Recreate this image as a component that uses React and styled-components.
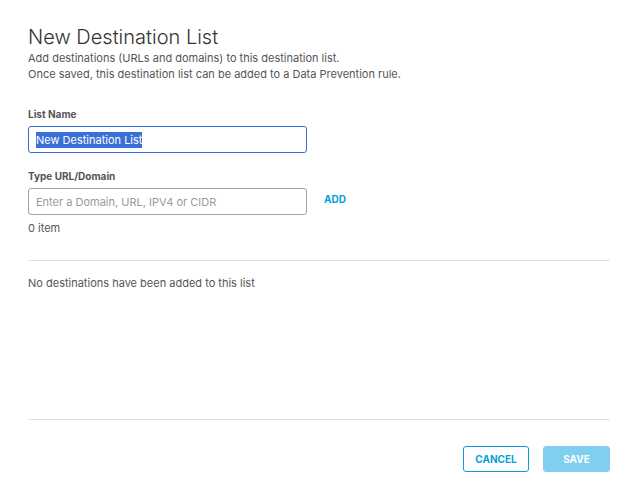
import React from "react";
import styled, { createGlobalStyle } from "styled-components";

const GlobalStyle = createGlobalStyle`
  html, body {
    margin: 0;
    padding: 0;
    background: #FFFFFF;
  }
  body {
    font-family: Inter, "Noto Sans", "Liberation Sans", sans-serif;
  }
`;

const Page = styled.div`
  display: flex;
  flex-direction: column;
  box-sizing: border-box;
  height: 500px;
  padding: 25px 28px 28px 28px;
`;

const Title = styled.h1`
  margin: 0;
  font-size: 20px;
  line-height: 24px;
  font-weight: 300;
  color: #333333;
`;

const Subtitle = styled.p`
  margin: 1px 0 0;
  font-size: 11px;
  line-height: 16px;
  color: #555555;
`;

const Field = styled.div`
  display: flex;
  flex-direction: column;
  margin-top: ${(p) => p.$top}px;
`;

const Label = styled.label`
  font-size: 10px;
  line-height: 14px;
  font-weight: 700;
  color: #555555;
  margin-bottom: 5px;
`;

const Row = styled.div`
  display: flex;
  align-items: center;
  gap: 17px;
`;

const InputBox = styled.div`
  box-sizing: border-box;
  display: flex;
  align-items: center;
  width: 279px;
  height: 27px;
  padding: 0 7px;
  border: 1px solid ${(p) => (p.$focused ? "#2f6fdc" : "#a3a3a3")};
  border-radius: 3px;
  font-size: 11px;
  color: ${(p) => (p.$placeholder ? "#9a9a9a" : "#333333")};
`;

const Selected = styled.span`
  background: #3a6fd8;
  color: #FFFFFF;
  line-height: 16px;
`;

const LinkButton = styled.button`
  border: 0;
  background: none;
  padding: 0 0 5px;
  font-family: inherit;
  font-size: 10px;
  font-weight: 700;
  color: #049fd9;
  cursor: pointer;
`;

const Count = styled.div`
  margin-top: 5px;
  font-size: 11px;
  line-height: 16px;
  color: #555555;
`;

const Divider = styled.hr`
  margin: ${(p) => p.$top}px 0 0;
  border: 0;
  border-top: 1px solid #e0e0e0;
`;

const ListArea = styled.div`
  flex: 1;
  padding-top: 14px;
  font-size: 11px;
  line-height: 16px;
  color: #555555;
`;

const Footer = styled.div`
  display: flex;
  justify-content: flex-end;
  gap: 14px;
  padding-top: 26px;
`;

const Button = styled.button`
  box-sizing: border-box;
  width: ${(p) => (p.$primary ? 67 : 66)}px;
  height: 26px;
  border-radius: 3px;
  border: 1px solid ${(p) => (p.$primary ? "#80cfee" : "#049fd9")};
  background: ${(p) => (p.$primary ? "#80cfee" : "#FFFFFF")};
  color: ${(p) => (p.$primary ? "#FFFFFF" : "#049fd9")};
  font-family: inherit;
  font-size: 10px;
  font-weight: 700;
  cursor: pointer;
`;

export default function App() {
  return (
    <>
      <GlobalStyle />
      <Page>
        <Title>New Destination List</Title>
        <Subtitle>
          Add destinations (URLs and domains) to this destination list.
          <br />
          Once saved, this destination list can be added to a Data Prevention rule.
        </Subtitle>

        <Field $top={25}>
          <Label>List Name</Label>
          <InputBox $focused>
            <Selected>New Destination List</Selected>
          </InputBox>
        </Field>

        <Field $top={16}>
          <Label>Type URL/Domain</Label>
          <Row>
            <InputBox $placeholder>Enter a Domain, URL, IPV4 or CIDR</InputBox>
            <LinkButton>ADD</LinkButton>
          </Row>
        </Field>
        <Count>0 item</Count>

        <Divider $top={24} />
        <ListArea>No destinations have been added to this list</ListArea>

        <Divider $top={0} />
        <Footer>
          <Button>CANCEL</Button>
          <Button $primary>SAVE</Button>
        </Footer>
      </Page>
    </>
  );
}
